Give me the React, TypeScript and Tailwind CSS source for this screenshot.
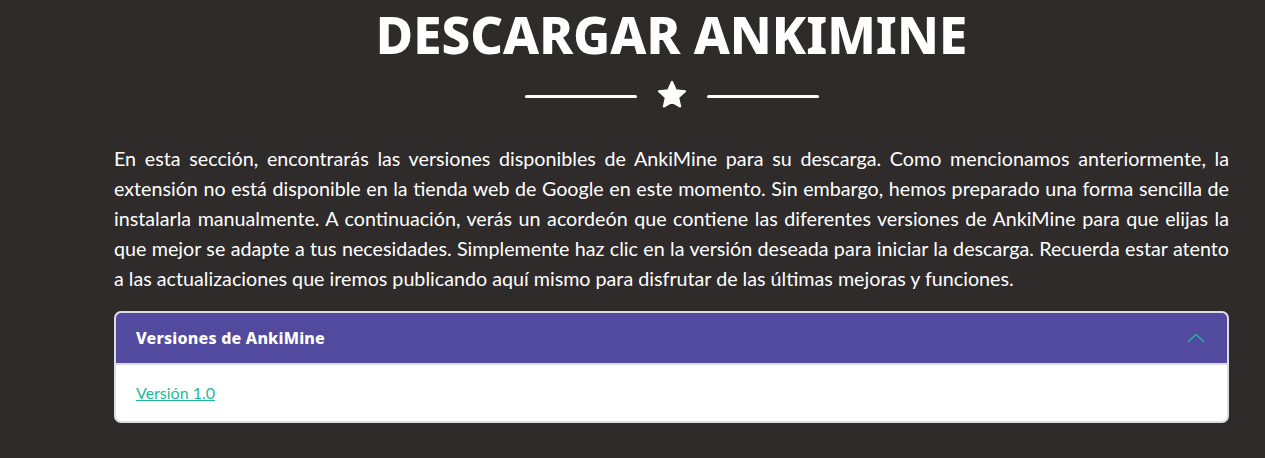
import { useState } from "react";

export default function App() {
  const [open, setOpen] = useState(true);

  return (
    <div className="min-h-screen w-full bg-[#2f2b2b] overflow-hidden">
      <div className="w-[1115px] ml-[114px]">
        {/* heading */}
        <h1 className="pt-[2px] text-center text-white font-extrabold text-[51px] leading-[64px] tracking-[0px] font-['Noto_Sans',sans-serif]">
          DESCARGAR ANKIMINE
        </h1>
        <div className="flex items-center justify-center gap-[18px] mt-[15px]">
          <div className="w-[112px] h-[3px] rounded-full bg-white" />
          <svg width="34" height="32" viewBox="0 0 24 24" className="-mt-[2px]">
            <path
              fill="#ffffff"
              stroke="#ffffff"
              strokeWidth="1.6"
              strokeLinejoin="round"
              d="M12 2.2l2.9 6.3 6.9.7-5.2 4.6 1.5 6.8L12 17.1l-6.1 3.5 1.5-6.8-5.2-4.6 6.9-.7z"
            />
          </svg>
          <div className="w-[112px] h-[3px] rounded-full bg-white" />
        </div>

        {/* intro */}
        <p className="mt-[33px] text-white text-[19.7px] leading-[30px] text-justify font-['Lato',sans-serif]">
          En esta sección, encontrarás las versiones disponibles de AnkiMine para su descarga. Como mencionamos anteriormente, la extensión no está disponible en la tienda web de Google en este momento. Sin embargo, hemos preparado una forma sencilla de instalarla manualmente. A continuación, verás un acordeón que contiene las diferentes versiones de AnkiMine para que elijas la que mejor se adapte a tus necesidades. Simplemente haz clic en la versión deseada para iniciar la descarga. Recuerda estar atento a las actualizaciones que iremos publicando aquí mismo para disfrutar de las últimas mejoras y funciones.
        </p>

        {/* accordion */}
        <div className="mt-[17px] rounded-[7px] border-2 border-[#dedde3] overflow-hidden bg-white">
          <button
            onClick={() => setOpen(!open)}
            className="w-full h-[50px] flex items-center justify-between pl-[20px] pr-[22px] bg-[#524a9e] text-white text-[16px] tracking-[0.2px] font-extrabold font-['Noto_Sans',sans-serif]"
          >
            <span>Versiones de AnkiMine</span>
            <svg width="18" height="10" viewBox="0 0 18 10" className={open ? "" : "rotate-180"}>
              <path d="M1 9L9 1.5 17 9" fill="none" stroke="#1fb99a" strokeWidth="1.5" />
            </svg>
          </button>
          {open && (
            <div className="h-[58px] flex items-center px-[20px] border-t-2 border-[#dedde3]">
              <a href="#" className="text-[#1fb99a] underline text-[16px] font-['Lato',sans-serif]">
                Versión 1.0
              </a>
            </div>
          )}
        </div>
      </div>
    </div>
  );
}
